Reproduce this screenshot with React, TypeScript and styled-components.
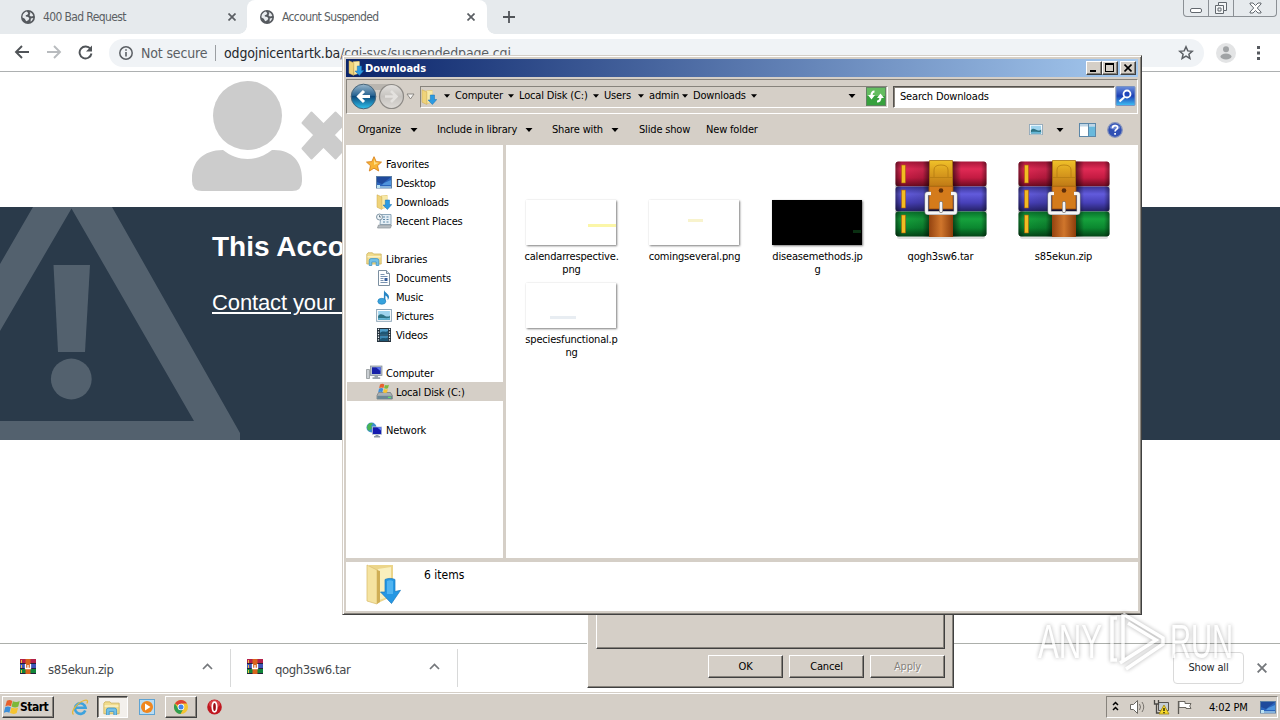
import React from 'react';
import styled, { createGlobalStyle, css } from 'styled-components';

const FACE = '#d5cfc7';

const GlobalStyle = createGlobalStyle`
	*, *::before, *::after {
		box-sizing: border-box;
	}

	body {
		margin: 0;
		overflow: hidden;
		background: #fff;
		color: #000;
		font-family: "DejaVu Sans Condensed", "DejaVu Sans", sans-serif;
		font-size: 11px;
		font-stretch: condensed;
		letter-spacing: -0.17px;
	}

	svg {
		display: block;
		flex: none;
	}
`;

/* ---------- icons ---------- */

const Globe = () => (
	<svg width="14" height="14" viewBox="0 0 14 14">
		<circle cx="7" cy="7" r="7" fill="#55595e" />
		<path d="M1.500 6.300C1.700 4 3.600 2 5.900 1.600L7.300 3.300 6.400 4.700 4.700 5.200 4.900 6.500 7.300 7l1 1.600-1 1.700-2.100.9L3.800 8.700 1.500 7.600z" fill="#e8ebee" />
		<path d="M8.700 1.900c1.800.7 3.200 2.100 3.600 4L9.900 6.400 8.400 5.200 9.300 3.700zM9.800 8.500l2.500-.4c-.3 1.500-1.300 2.900-2.700 3.700z" fill="#e8ebee" />
	</svg>
);

const Cross = ({ size = 8, color = '#5a5e63', width = 1.7 }) => (
	<svg width={size} height={size} viewBox="0 0 8 8">
		<path d="M.5.5l7 7M7.500.5l-7 7" stroke={color} strokeWidth={width} />
	</svg>
);

const Arrow = ({ size = 7 }) => (
	<svg width={size} height="4" viewBox="0 0 7 4">
		<path d="M0 0h7L3.500 4z" fill="#000" />
	</svg>
);

const DownFolder = ({ size = 16 }) => (
	<svg width={size} height={size} viewBox="0 0 16 16">
		<path d="M5 1.500l6.500-.5v12.500L6 15z" fill="#e9cf7c" />
		<path d="M5.500 2l5.800 0v11l-5 1z" fill="#f7e9a8" />
		<path d="M1 .8l4.800 2v12.700L1 13.200z" fill="#efd37a" stroke="#cda94c" strokeWidth=".5" />
		<path d="M9.300 6h4.200v4.500h2.300l-4.400 5-4.400-4.500h2.300z" fill="#2b9be2" stroke="#1b6fb0" strokeWidth=".5" />
	</svg>
);

const BigDownFolder = () => (
	<svg width="36" height="42" viewBox="0 0 36 42">
		<path d="M3 1h24v31l-15 7z" fill="#ecd58a" />
		<path d="M12 5l13-2v29l-12 4z" fill="#f9efbd" />
		<path d="M1 1l10 5v34L1 37z" fill="#f5e3a0" stroke="#dcc071" strokeWidth=".8" />
		<path d="M11 6l3 1v31l-3 2z" fill="#cfae55" />
		<path d="M19 15.500c3-1.500 7-1.500 10 0v12l5.500-1.200L25.500 39.500 14.500 28l4.500 0z" fill="#2597e3" stroke="#1878bd" strokeWidth=".7" />
		<path d="M21 17c2-1 4-1 6 0v13h-6z" fill="#50b4f1" />
	</svg>
);

const Star = () => (
	<svg width="16" height="16" viewBox="0 0 16 16">
		<path d="M8 .7l2.200 4.900 5.300.5-4 3.600 1.200 5.300L8 12.200 3.300 15l1.200-5.300-4-3.600 5.300-.5z" fill="#f8b334" stroke="#d98420" strokeWidth=".9" />
		<path d="M8 3l1.300 3.500 3.500.3L8 9z" fill="#fde08a" />
	</svg>
);

const Desktop = () => (
	<svg width="16" height="13" viewBox="0 0 16 13">
		<rect x=".5" y=".5" width="15" height="11.500" fill="#2a64bd" stroke="#5c7fa5" />
		<path d="M1 1h14L6 8 1 6z" fill="#1f4a9c" />
		<path d="M8 7l7-3v5H6z" fill="#4f94dc" />
		<path d="M1 10h14v2H1z" fill="#85b2dc" />
		<path d="M1 9h3v3H1z" fill="#bce2f2" />
	</svg>
);

const Recent = () => (
	<svg width="16" height="16" viewBox="0 0 16 16">
		<path d="M5 1.500h10v10H4z" fill="#e4eef5" stroke="#8ea8bb" />
		<path d="M7 4h2M10.500 4h2M7 6.500h2M10.500 6.500h2M7 9h2M10.500 9h2" stroke="#5d87a8" strokeWidth="1.200" />
		<path d="M2.500 12h13l-1 3H1.500z" fill="#b7bdc2" stroke="#8b9298" strokeWidth=".7" />
		<circle cx="3.500" cy="4" r="3" fill="#eef4f8" stroke="#8196a5" />
		<path d="M3.500 2.300V4H5" stroke="#47606f" strokeWidth=".8" fill="none" />
	</svg>
);

const Library = ({ size = 16 }) => (
	<svg width={size} height={size * 0.875} viewBox="0 0 16 14">
		<path d="M.8 2.200L2 .8h4.500l1 1.200h7.700v10H.8z" fill="#f1dc8d" stroke="#cdb25c" strokeWidth=".8" />
		<path d="M1.500 4h13v1.500h-13z" fill="#fbf1c3" />
		<path d="M3.200 13.500V8.600q0-2 2-2h5.600q2 0 2 2v4.900h-2.600v-3.500H5.800v3.500z" fill="#72c1e8" stroke="#3e94c8" strokeWidth=".8" />
	</svg>
);

const Doc = () => (
	<svg width="16" height="16" viewBox="0 0 16 16">
		<path d="M2.500.5h8l3 3v12h-11z" fill="#fdfeff" stroke="#7c8fa0" />
		<path d="M10.500.5v3h3" fill="#d4e1ec" stroke="#7c8fa0" />
		<path d="M4.500 4.500h4M4.500 6.500h7M4.500 8.500h3M4.500 10.500h3M4.500 12.500h7" stroke="#7993b0" />
		<path d="M8.500 8h3v3h-3z" fill="#345d9c" />
	</svg>
);

const Music = () => (
	<svg width="16" height="16" viewBox="0 0 16 16">
		<path d="M8 .5c0 3 5 4 5 7.500 0 1.500-.6 2.400-1.300 3.200.4-2.600-.6-4-2.300-4.800V12h-1.600z" fill="#2685c4" />
		<ellipse cx="5.800" cy="12.300" rx="4" ry="3" fill="#37a3dd" stroke="#1f78b5" strokeWidth=".6" />
	</svg>
);

const Picture = ({ width = 16 }) => (
	<svg width={width} height={width * 0.8} viewBox="0 0 16 13">
		<rect x=".5" y=".5" width="15" height="12" fill="#fff" stroke="#8da5b8" />
		<path d="M2 2h12v9H2z" fill="#9fd4ee" />
		<path d="M2 7c3-3 5-1 7 0s4 1 5-.5V11H2z" fill="#2e7385" />
		<path d="M2 9.500c4-1 8 .5 12-.500v2H2z" fill="#64b6d6" />
	</svg>
);

const Video = () => (
	<svg width="14" height="14" viewBox="0 0 14 14">
		<path d="M0 0h14v14H0z" fill="#25323d" />
		<path d="M3 1h8v5.500H3z" fill="#4e9cc8" />
		<path d="M3 7.500h8V13H3z" fill="#3d87b2" />
		<path d="M3 5c3-3 5 0 8-2v3.500H3zM3 11.500c3-3 5 0 8-2V13H3z" fill="#1d5675" />
		<path d="M1.500.8v13M12.500.8v13" stroke="#e8eef2" strokeWidth="1.200" strokeDasharray="1.300 1.300" />
	</svg>
);

const Pc = () => (
	<svg width="17" height="15" viewBox="0 0 17 15">
		<path d="M.5 4.500h3v9h-3z" fill="#c9ced2" stroke="#84898e" strokeWidth=".7" />
		<rect x="4.500" y="1" width="11.500" height="9.500" fill="#b7c2cd" stroke="#7e8893" strokeWidth=".7" />
		<path d="M6 2.300h8.600v6.700H6z" fill="#1720a8" />
		<path d="M10 2.300h4.600v4z" fill="#5a74ee" />
		<path d="M8.500 10.500h3.500v1.800h2.200V14H6.500v-1.700h2z" fill="#9aa4ae" />
	</svg>
);

const WinFlag = ({ size = 16 }) => (
	<svg width={size} height={size} viewBox="0 0 16 16">
		<path d="M2.900 1.800C5 .6 6.300.8 8.300 1.900L7 7.300C5 6.400 3.300 6.300 1.300 7.400z" fill="#e8602c" />
		<path d="M8.900 2.200c2 .9 4.200 1.300 6.800-.3L14.300 7.600c-2.300 1.300-4.500 1-6.700 0z" fill="#7db83a" />
		<path d="M1.200 8.200C3 7.200 4.700 7.300 6.800 8.200l-1.400 5.600C3.500 12.800 1.900 12.800-.2 13.900z" fill="#3d8fd9" />
		<path d="M7.400 8.500c2.100.9 4.300 1.100 6.700-.1l-1.400 5.700c-2.300 1.200-4.500 1-6.700 0z" fill="#f6c431" />
	</svg>
);

const Disk = () => (
	<svg width="17" height="17" viewBox="0 0 17 17">
		<path d="M2.500 9.500h12l1.800 3v3.500H1v-3.500z" fill="#a9b0b3" stroke="#6f767a" strokeWidth=".7" />
		<path d="M1.300 12.800h14.800V16H1.300z" fill="#6b8794" />
		<path d="M12 13.800h3v1.200h-3z" fill="#62e069" />
		<path d="M4 1.500c2-1.200 3-.8 4.300 0L7.500 5C6 4.200 4.800 4.200 3.200 5z" fill="#e8602c" />
		<path d="M8.900 1.900c1.400.7 2.600.6 4-.2l-.9 3.600c-1.300.7-2.500.6-3.900 0z" fill="#7db83a" />
		<path d="M3 5.700c1.500-.8 2.800-.8 4.200 0l-.9 3.500c-1.300-.7-2.700-.7-4.100 0z" fill="#3d8fd9" />
		<path d="M7.900 6c1.400.7 2.600.6 4-.1L11 9.500c-1.400.7-2.600.6-4 0z" fill="#f6c431" />
	</svg>
);

const NetworkIcon = () => (
	<svg width="16" height="16" viewBox="0 0 16 16">
		<circle cx="5.500" cy="5.500" r="5" fill="#3c8fd0" />
		<path d="M2 2.500C4 .5 6 .8 7 1.500L5 4l1 2-3 3C1 7.500.4 5 2 2.500z" fill="#49b552" />
		<path d="M6 4.500h10v8.500H6z" fill="#c0cbd6" />
		<path d="M6.800 5.300h8.400v6.700H6.800z" fill="#151bb0" />
		<path d="M11 5.300h4.200v3.500z" fill="#6180f0" />
		<path d="M9.500 13h3v1h1.600v1.500H8V14h1.500z" fill="#8d98a4" />
	</svg>
);

const Rar = () => (
	<svg width="92" height="80" viewBox="0 0 92 80">
		<defs>
			<linearGradient id="rarRed" x2="0" y2="1">
				<stop offset="0" stopColor="#a8173a" />
				<stop offset=".3" stopColor="#e02a55" />
				<stop offset=".65" stopColor="#c41b42" />
				<stop offset="1" stopColor="#6b0a20" />
			</linearGradient>
			<linearGradient id="rarBlue" x2="0" y2="1">
				<stop offset="0" stopColor="#3a3596" />
				<stop offset=".3" stopColor="#625bdc" />
				<stop offset=".65" stopColor="#4740b8" />
				<stop offset="1" stopColor="#242063" />
			</linearGradient>
			<linearGradient id="rarGreen" x2="0" y2="1">
				<stop offset="0" stopColor="#08702b" />
				<stop offset=".3" stopColor="#16a23d" />
				<stop offset=".65" stopColor="#0b8830" />
				<stop offset="1" stopColor="#044517" />
			</linearGradient>
			<linearGradient id="rarShade">
				<stop offset="0" stopColor="#000" stopOpacity=".45" />
				<stop offset=".07" stopColor="#000" stopOpacity="0" />
				<stop offset=".3" stopColor="#000" stopOpacity=".12" />
				<stop offset=".36" stopColor="#000" stopOpacity=".5" />
				<stop offset=".64" stopColor="#000" stopOpacity=".5" />
				<stop offset=".72" stopColor="#000" stopOpacity="0" />
				<stop offset=".94" stopColor="#000" stopOpacity="0" />
				<stop offset="1" stopColor="#000" stopOpacity=".4" />
			</linearGradient>
			<linearGradient id="rarGold" x2="0" y2="1">
				<stop offset="0" stopColor="#f0c22a" />
				<stop offset=".4" stopColor="#dda21f" />
				<stop offset="1" stopColor="#c17a17" />
			</linearGradient>
			<linearGradient id="rarBrown">
				<stop offset="0" stopColor="#944310" />
				<stop offset=".5" stopColor="#d0762c" />
				<stop offset="1" stopColor="#8c3d0c" />
			</linearGradient>
		</defs>
		<rect x="2" y="75" width="88" height="4" rx="2" fill="#000" opacity=".12" />
		<rect x=".5" y="1.500" width="91" height="25" rx="3" fill="url(#rarRed)" />
		<rect x=".5" y="26.500" width="91" height="25" rx="3" fill="url(#rarBlue)" />
		<rect x=".5" y="51.500" width="91" height="25" rx="3" fill="url(#rarGreen)" />
		<rect x=".5" y="1.500" width="91" height="75" rx="3" fill="url(#rarShade)" />
		<path d="M6.500 5h4v18h-4zM6.500 30h4v18h-4zM6.500 55h4v18h-4z" fill="#f2bd22" stroke="#a9570f" strokeWidth=".6" />
		<path d="M34 53h24v24H34z" fill="url(#rarBrown)" />
		<path d="M34 26h24v23H34z" fill="#d47b1b" stroke="#8f480d" strokeWidth=".8" />
		<path d="M34.500.5h23V26h-23z" fill="url(#rarGold)" stroke="#a8730f" strokeWidth=".8" />
		<path d="M35 17.500h22M39 17V10q0-5 7-5t7 5v7" fill="none" stroke="#b57c12" strokeWidth=".8" />
		<circle cx="46" cy="30.500" r="2.300" fill="#5e2d0a" />
		<path d="M36 33.500h-3q-1.500 0-1.500 1.500v16.500q0 1.500 1.500 1.500h26q1.500 0 1.500-1.500V35q0-1.500-1.500-1.500H56" fill="none" stroke="#8a8a8d" strokeWidth="4" />
		<path d="M36 33.500h-3q-1.500 0-1.500 1.500v16.500q0 1.500 1.500 1.500h26q1.500 0 1.500-1.500V35q0-1.500-1.500-1.500H56" fill="none" stroke="#f4f4f6" strokeWidth="2.800" />
		<path d="M46 43v8" stroke="#76706b" strokeWidth="3.800" strokeLinecap="round" />
		<path d="M46 43v8" stroke="#f2f2f4" strokeWidth="2.600" strokeLinecap="round" />
	</svg>
);

const SmallRar = () => (
	<svg width="16" height="15" viewBox="0 0 16 15">
		<path d="M0 0h16v5H0z" fill="#b32049" />
		<path d="M0 5h16v5H0z" fill="#4055b8" />
		<path d="M0 10h16v5H0z" fill="#11853a" />
		<path d="M0 4.500h16M0 9.500h16M0 14.500h16" stroke="#25203a" />
		<path d="M1.500 1v3M1.500 6v3M1.500 11v3" stroke="#eec145" />
		<path d="M5.500 0h5v15h-5z" fill="#d8631d" />
		<path d="M5.500 5v4.500h5V5M8 6v3.500" stroke="#fff" strokeWidth="1.300" fill="none" />
	</svg>
);

const Chevron = () => (
	<svg width="11" height="7" viewBox="0 0 11 7">
		<path d="M1 6l4.500-4.500L10 6" fill="none" stroke="#74777b" strokeWidth="1.700" />
	</svg>
);

/* ---------- browser ---------- */

const Screen = styled.div`
	position: relative;
	width: 1280px;
	height: 720px;
	display: flex;
	flex-direction: column;
	overflow: hidden;
	white-space: nowrap;
	cursor: default;
`;

const TabStrip = styled.div`
	height: 34px;
	flex: none;
	display: flex;
	background: #e6eaed;
`;

const Tab = styled.div<{ $active?: boolean }>`
	position: relative;
	width: ${({ $active }) => ($active ? 240 : 247)}px;
	padding: 0 ${({ $active }) => ($active ? '12px 0 13px' : '11px 0 21px')};
	display: flex;
	align-items: center;
	color: #5b5f64;
	font-size: 12px;
	letter-spacing: -0.62px;

	${({ $active }) =>
		$active &&
		css`
			background: #fff;
			border-radius: 8px 8px 0 0;

			&::before,
			&::after {
				content: '';
				position: absolute;
				bottom: 0;
				width: 8px;
				height: 8px;
			}

			&::before {
				left: -8px;
				background: radial-gradient(circle at 0 0, transparent 7.5px, #fff 8px);
			}

			&::after {
				right: -8px;
				background: radial-gradient(circle at 8px 0, transparent 7.5px, #fff 8px);
			}
		`}
`;

const TabTitle = styled.span`
	flex: 1;
	margin-left: 8px;
`;

const NewTab = styled.div`
	width: 44px;
	display: flex;
	align-items: center;
	justify-content: center;
`;

const Controls = styled.div`
	display: grid;
	grid-template-columns: 24px 25px 43px;
	height: 17px;
	margin: 0 3px 0 auto;
	border: 1px solid #8b9095;
	border-top: 0;
	border-radius: 0 0 4px 4px;
`;

const Control = styled.div`
	display: flex;
	align-items: center;
	justify-content: center;

	& + & {
		border-left: 1px solid #8b9095;
	}
`;

const Toolbar = styled.div`
	height: 38px;
	flex: none;
	display: flex;
	align-items: center;
	padding-left: 14px;
	border-bottom: 1px solid #adb0b1;
	background: #fff;
`;

const NavGlyph = styled.div`
	width: 32px;
	padding-bottom: 1px;
`;

const Omnibox = styled.div`
	display: flex;
	align-items: center;
	width: 1095px;
	height: 28px;
	margin-left: -1px;
	padding: 0 10px 0 10px;
	border-radius: 14px;
	background: #f0f3f6;
	color: #5b5f64;
	font-size: 14px;
	letter-spacing: -0.15px;
`;

const Security = styled.span`
	width: 74px;
	margin-left: 8px;
	padding-right: 7px;
	letter-spacing: -0.15px;
`;

const Url = styled.span`
	flex: 1;
	padding-left: 8px;
	border-left: 1px solid #9b9ea2;
	line-height: 16px;

	b {
		color: #25282c;
		font-weight: 400;
	}
`;

const Avatar = styled.div`
	margin-left: 12px;
	margin-right: 21px;
`;

const Page = styled.div`
	flex: 1;
	background: #fff;
`;

const Account = styled.div`
	height: 135px;
	padding: 9px 0 0 192px;
`;

const Band = styled.div`
	display: flex;
	height: 233px;
	background: #2a3a4a;
	color: #fff;
	font-family: "Liberation Sans", Arial, sans-serif;
	letter-spacing: 0;
`;

const Message = styled.div`
	margin-left: -28px;
	padding-top: 23px;
	font-size: 22px;

	h1 {
		margin: 0 0 25px;
		font-size: 28px;
		line-height: 34px;
		letter-spacing: 0;
	}

	a {
		display: block;
		line-height: 28px;
		text-decoration: underline;
		letter-spacing: -0.12px;
	}
`;

const Shelf = styled.div`
	height: 49px;
	flex: none;
	display: flex;
	align-items: center;
	border-top: 1px solid #acafab;
	background: #fff;
`;

const Download = styled.div<{ $width: number }>`
	width: ${({ $width }) => $width}px;
	height: 38px;
	display: flex;
	align-items: center;
	padding: 0 17px 3px ${({ $width }) => ($width > 228 ? 20 : 16)}px;
	border-right: 1px solid #d8d9d9;
	color: #44474b;
	font-size: 13px;
	letter-spacing: -0.4px;

	span {
		flex: 1;
		margin-left: 12px;
		padding-top: 6px;
	}
`;

const ShowAll = styled.div`
	width: 71px;
	height: 32px;
	margin: 0 13px 0 auto;
	display: flex;
	align-items: center;
	justify-content: center;
	padding-bottom: 2px;
	border: 1px solid #dadada;
	border-radius: 4px;
	color: #25282c;
`;

const ShelfClose = styled.div`
	margin-right: 13px;
`;

/* ---------- classic windows parts ---------- */

const raised = css`
	border: 1px solid;
	border-color: #fff #404040 #404040 #fff;
	box-shadow: inset -1px -1px #87837c;
	background: ${FACE};
`;

const sunken = css`
	border: 1px solid;
	border-color: #87837c #fff #fff #87837c;
`;

const Dialog = styled.div`
	position: absolute;
	left: 587px;
	top: 600px;
	width: 367px;
	height: 88px;
	padding: 0 8px;
	${raised}
`;

const DialogPanel = styled.div`
	height: 48px;
	border: 1px solid;
	border-color: #fff #404040 #404040 #fff;
	box-shadow: inset -1px -1px #87837c;
`;

const DialogButtons = styled.div`
	display: flex;
	justify-content: flex-end;
	gap: 6px;
	margin-top: 6px;
`;

const DialogButton = styled.div<{ $disabled?: boolean }>`
	width: 75px;
	height: 23px;
	display: flex;
	align-items: center;
	justify-content: center;
	padding-bottom: 1px;
	${raised}
	${({ $disabled }) =>
		$disabled &&
		css`
			color: #87837c;
			text-shadow: 1px 1px #fff;
		`}
`;

const Explorer = styled.div`
	position: absolute;
	left: 342px;
	top: 55px;
	width: 800px;
	height: 560px;
	display: flex;
	flex-direction: column;
	padding: 3px;
	border: 1px solid;
	border-color: ${FACE} #404040 #404040 ${FACE};
	box-shadow: inset 1px 1px #fff, inset -1px -1px #87837c;
	background: ${FACE};
`;

const TitleBar = styled.div`
	height: 18px;
	flex: none;
	display: flex;
	align-items: center;
	padding: 0 2px;
	background: linear-gradient(to right, #0a246a, #a6caf0);
	color: #fff;
	font-weight: 700;
	letter-spacing: 0;

	span {
		flex: 1;
		margin-left: 1px;
	}
`;

const CaptionButton = styled.div<{ $gap?: boolean }>`
	width: 16px;
	height: 14px;
	margin-left: ${({ $gap }) => ($gap ? 2 : 0)}px;
	display: flex;
	align-items: center;
	justify-content: center;
	${raised}
`;

const NavBar = styled.div`
	height: 35px;
	flex: none;
	margin-top: 2px;
	display: flex;
	align-items: center;
	padding-left: 3px;
	border: 1px solid;
	border-color: #87837c #fff #fff #87837c;
`;

const Address = styled.div`
	width: 468px;
	height: 22px;
	margin-left: 5px;
	display: flex;
	align-items: center;
	${sunken}
`;

const Crumb = styled.div<{ $width: number }>`
	width: ${({ $width }) => $width}px;
	display: flex;
	align-items: center;

	span {
		margin-left: 5px;
	}
`;

const Crumbs = styled.div`
	display: flex;
	align-items: center;
	padding-bottom: 2px;
`;

const Search = styled.div`
	width: 222px;
	height: 22px;
	margin-left: 5px;
	padding-left: 6px;
	line-height: 19px;
	border: 1px solid;
	border-color: #55524e #fff #fff #55524e;
	box-shadow: inset 1px 1px #87837c;
	background: #fff;
`;

const Commands = styled.div`
	height: 31px;
	flex: none;
	display: flex;
	align-items: center;
	padding-left: 12px;
`;

const Command = styled.div<{ $width: number; $text?: number }>`
	width: ${({ $width }) => $width}px;
	display: flex;
	align-items: center;

	span {
		width: ${({ $text }) => ($text ? $text + 'px' : 'auto')};
	}
`;

const CommandIcons = styled.div`
	flex: 1;
	display: flex;
	align-items: center;
	justify-content: flex-end;
	padding-right: 15px;
`;

const CommandIcon = styled.div<{ $gap: number }>`
	margin-left: ${({ $gap }) => $gap}px;
`;

const Body = styled.div`
	height: 413px;
	flex: none;
	display: flex;
	background: #fff;
`;

const Tree = styled.div`
	width: 160px;
	padding-top: 9px;
	border-right: 3px solid ${FACE};
`;

const Group = styled.div`
	margin-bottom: 19px;
`;

const Node = styled.div<{ $child?: boolean; $selected?: boolean }>`
	height: 19px;
	display: flex;
	align-items: center;
	margin-left: 1px;
	padding-left: ${({ $child }) => ($child ? 28 : 18)}px;
	background: ${({ $selected }) => ($selected ? FACE : 'none')};

	span {
		padding-top: 2px;
	}
`;

const NodeIcon = styled.div`
	width: 18px;
	margin-right: 3px;
	display: flex;
	justify-content: center;
`;

const Files = styled.div`
	display: grid;
	grid-template-columns: repeat(5, 123px);
	grid-template-rows: 122px 83px;
	padding: 9px 0 0 4px;
`;

const File = styled.div`
	display: flex;
	flex-direction: column;
	align-items: center;
	justify-content: flex-start;
`;

const Preview = styled.div<{ $height: number; $archive: boolean }>`
	height: ${({ $height }) => $height}px;
	display: flex;
	align-items: flex-end;
	padding-bottom: ${({ $archive }) => ($archive ? 10 : 5)}px;
`;

const Thumb = styled.div<{ $fill?: string }>`
	width: 90px;
	height: 45px;
	margin-right: 1px;
	background: ${({ $fill }) => $fill || '#fff'};
	box-shadow: 1px 1px 2px rgba(0, 0, 0, 0.5), 0 0 1px rgba(0, 0, 0, 0.1);
`;

const Mark = styled.div<{ $x: number; $y: number; $w: number; $color: string }>`
	width: ${({ $w }) => $w}px;
	height: 3px;
	margin-left: ${({ $x }) => $x}px;
	transform: translateY(${({ $y }) => $y}px);
	background: ${({ $color }) => $color};
`;

const FileName = styled.div`
	line-height: 13px;
	text-align: center;
	white-space: pre;
`;

const Details = styled.div`
	flex: 1;
	margin-top: 4px;
	display: flex;
	padding: 2px 0 0 20px;
	background: #fff;

	span {
		margin: 4px 0 0 22px;
		font-size: 12px;
		letter-spacing: 0;
	}
`;

/* ---------- taskbar ---------- */

const Taskbar = styled.div`
	height: 28px;
	flex: none;
	display: flex;
	align-items: center;
	padding: 1px 2px 0;
	border-top: 1px solid ${FACE};
	box-shadow: inset 0 1px #fff;
	background: ${FACE};
`;

const Start = styled.div`
	width: 52px;
	height: 22px;
	display: flex;
	align-items: center;
	margin-right: 9px;
	padding-left: 1px;
	font-size: 12px;
	font-weight: 700;
	letter-spacing: -0.5px;
	${raised}
`;

const Task = styled.div<{ $width: number; $state?: 'up' | 'down' }>`
	width: ${({ $width }) => $width}px;
	height: 22px;
	display: flex;
	align-items: center;
	justify-content: center;
	${({ $state }) => $state === 'up' && raised}
	${({ $state }) =>
		$state === 'down' &&
		css`
			border: 1px solid;
			border-color: #404040 #fff #fff #404040;
			box-shadow: inset 1px 1px #87837c;
			background: #f3f0ec;
			padding: 2px 2px 0 0;
		`}
`;

const Tray = styled.div`
	width: 172px;
	height: 22px;
	margin-left: auto;
	display: flex;
	align-items: center;
	padding: 0 1px 0 5px;
	${sunken}
`;

const Clock = styled.span`
	width: 52px;
	margin-left: 14px;
`;

const Watermark = styled.div`
	position: absolute;
	left: 1030px;
	top: 605px;
	filter: drop-shadow(0 0 2px rgba(0, 0, 0, 0.45));
	opacity: 0.68;
`;

const tree = [
	{ name: 'Favorites', icon: <Star />, items: [
		{ name: 'Desktop', icon: <Desktop /> },
		{ name: 'Downloads', icon: <DownFolder /> },
		{ name: 'Recent Places', icon: <Recent /> },
	] },
	{ name: 'Libraries', icon: <Library />, items: [
		{ name: 'Documents', icon: <Doc /> },
		{ name: 'Music', icon: <Music /> },
		{ name: 'Pictures', icon: <Picture /> },
		{ name: 'Videos', icon: <Video /> },
	] },
	{ name: 'Computer', icon: <Pc />, items: [
		{ name: 'Local Disk (C:)', icon: <Disk />, selected: true },
	] },
	{ name: 'Network', icon: <NetworkIcon />, items: [] },
];

const crumbs = [
	{ name: 'Computer', width: 64 },
	{ name: 'Local Disk (C:)', width: 85 },
	{ name: 'Users', width: 45 },
	{ name: 'admin', width: 44 },
	{ name: 'Downloads', width: 69 },
];

const files = [
	{ name: 'calendarrespective.\npng', mark: { x: 62, y: 24, w: 28, color: '#fbf6a8' } },
	{ name: 'comingseveral.png', mark: { x: 39, y: 19, w: 15, color: '#f8f3cd' } },
	{ name: 'diseasemethods.jp\ng', fill: '#000', mark: { x: 81, y: 30, w: 8, color: '#0a2f12' } },
	{ name: 'qogh3sw6.tar' },
	{ name: 's85ekun.zip' },
	{ name: 'speciesfunctional.p\nng', mark: { x: 24, y: 33, w: 26, color: '#e8edf2' } },
];

const BrowserTabs = () => (
	<TabStrip>
		<Tab>
			<Globe />
			<TabTitle>400 Bad Request</TabTitle>
			<Cross />
		</Tab>
		<Tab $active>
			<Globe />
			<TabTitle>Account Suspended</TabTitle>
			<Cross />
		</Tab>
		<NewTab>
			<svg width="12" height="12" viewBox="0 0 12 12">
				<path d="M6 0v12M0 6h12" stroke="#515559" strokeWidth="1.800" />
			</svg>
		</NewTab>
		<Controls>
			<Control>
				<svg width="12" height="14" viewBox="0 0 12 14">
					<rect x=".5" y="7.500" width="11" height="4" rx="1.500" fill="#fff" stroke="#62686e" />
				</svg>
			</Control>
			<Control>
				<svg width="14" height="14" viewBox="0 0 14 14">
					<path d="M4.500 1.500h8v8h-3v3h-8v-8h3z" fill="#f4f6f7" stroke="#62686e" />
					<path d="M4.500 4.500h5v5M4 7h3v3H4z" fill="none" stroke="#62686e" />
				</svg>
			</Control>
			<Control>
				<svg width="13" height="12" viewBox="0 0 13 12">
					<path d="M1 1h3l2.500 2.500L9 1h3v1L8.300 6l3.700 4v1H9L6.500 8.500 4 11H1v-1l3.700-4L1 2z" fill="#fff" stroke="#62686e" />
				</svg>
			</Control>
		</Controls>
	</TabStrip>
);

const BrowserToolbar = () => (
	<Toolbar>
		<NavGlyph>
			<svg width="16" height="14" viewBox="0 0 16 14">
				<path d="M15 7H2M8 1L2 7l6 6" fill="none" stroke="#505458" strokeWidth="1.900" />
			</svg>
		</NavGlyph>
		<NavGlyph>
			<svg width="16" height="14" viewBox="0 0 16 14">
				<path d="M1 7h13M8 1l6 6-6 6" fill="none" stroke="#b8bbbe" strokeWidth="1.900" />
			</svg>
		</NavGlyph>
		<NavGlyph>
			<svg width="15" height="15" viewBox="0 0 15 15">
				<path d="M12.500 4A6 6 0 1 0 13.500 8.500" fill="none" stroke="#505458" strokeWidth="1.900" />
				<path d="M14 .5v6H8z" fill="#505458" />
			</svg>
		</NavGlyph>
		<Omnibox>
			<svg width="14" height="14" viewBox="0 0 14 14">
				<circle cx="7" cy="7" r="6.200" fill="none" stroke="#5b5f64" strokeWidth="1.500" />
				<path d="M7 6v4.500M7 3.300v1.500" stroke="#5b5f64" strokeWidth="1.600" />
			</svg>
			<Security>Not secure</Security>
			<Url>
				<b>odgojnicentartk.ba</b>/cgi-sys/suspendedpage.cgi
			</Url>
			<svg width="16" height="15" viewBox="0 0 16 15">
				<path d="M8 1.800l1.800 4.100 4.400.4-3.300 2.900 1 4.300L8 11.200l-3.900 2.300 1-4.300-3.300-2.900 4.400-.4z" fill="none" stroke="#5b5f64" strokeWidth="1.500" />
			</svg>
		</Omnibox>
		<Avatar>
			<svg width="20" height="20" viewBox="0 0 20 20">
				<circle cx="10" cy="10" r="10" fill="#e3e4e5" />
				<circle cx="10" cy="6.200" r="3" fill="#a0a3a5" />
				<ellipse cx="10" cy="13.500" rx="5.500" ry="3" fill="#a0a3a5" />
			</svg>
		</Avatar>
		<svg width="3" height="14" viewBox="0 0 3 14">
			<path d="M0 0h3v3H0zM0 5.500h3v3H0zM0 11h3v3H0z" fill="#55595e" />
		</svg>
	</Toolbar>
);

const SuspendedPage = () => (
	<Page>
		<Account>
			<svg width="160" height="110" viewBox="0 0 160 110">
				<g fill="#ccc">
					<circle cx="55.500" cy="34.500" r="34.500" />
					<path d="M31 69c15 12 34 12 49 0 20-1 30 12 30 28v3q0 10-10 10H10Q0 110 0 100v-3C0 81 11 69 31 69z" />
					<path d="M119.500 31.500l12 12 12-12 10 10-12 12.500 12 12.500-10 11-12-12-12 12-9-10 12-13.500-12-12z" stroke="#ccc" strokeWidth="2" strokeLinejoin="round" />
				</g>
			</svg>
		</Account>
		<Band>
			<svg width="240" height="233" viewBox="0 0 240 233">
				<path d="M33 0h79l128 226v7H0v-19h194L71.500 1.500 0 124V57z" fill="#53616e" />
				<path d="M53.500 58H90l-5 87H58z" fill="#53616e" />
				<circle cx="71.300" cy="172" r="20.400" fill="#53616e" />
			</svg>
			<Message>
				<h1>This Accou</h1>
				<a>Contact your&nbsp;&nbsp;</a>
			</Message>
		</Band>
	</Page>
);

const ExplorerWindow = () => (
	<Explorer>
		<TitleBar>
			<DownFolder />
			<span>Downloads</span>
			<CaptionButton>
				<svg width="12" height="10" viewBox="0 0 12 10">
					<path d="M2 7h6v2H2z" />
				</svg>
			</CaptionButton>
			<CaptionButton>
				<svg width="10" height="10" viewBox="0 0 10 10">
					<path d="M0 0h9v9H0zM1 2v6h7V2z" fillRule="evenodd" />
				</svg>
			</CaptionButton>
			<CaptionButton $gap>
				<Cross size={8} color="#000" width={1.6} />
			</CaptionButton>
		</TitleBar>
		<NavBar>
			<svg width="65" height="29" viewBox="0 0 65 29">
				<defs>
					<linearGradient id="back" x2="0" y2="1">
						<stop offset="0" stopColor="#9ab8cc" />
						<stop offset=".45" stopColor="#2a6593" />
						<stop offset=".5" stopColor="#0d4a7c" />
						<stop offset="1" stopColor="#2fc3ef" />
					</linearGradient>
					<linearGradient id="fwd" x2="0" y2="1">
						<stop offset="0" stopColor="#e4e2df" />
						<stop offset=".5" stopColor="#c6c3bf" />
						<stop offset="1" stopColor="#dedbd7" />
					</linearGradient>
				</defs>
				<path d="M13 2h30q5 2 8 6H8z" fill="#b9b5af" />
				<circle cx="13.500" cy="14.500" r="12.300" fill="url(#back)" stroke="#47657a" />
				<path d="M14 9l-5.500 5.500L14 20M9 14.500h11" fill="none" stroke="#fff" strokeWidth="3" />
				<circle cx="41.500" cy="14.500" r="12" fill="url(#fwd)" stroke="#8c8985" strokeWidth="1.200" />
				<path d="M41 9l5.500 5.500L41 20M46 14.500H35" fill="none" stroke="#e3e1de" strokeWidth="2.600" />
				<path d="M57 12h7l-3.500 5z" fill="#f5f4f2" stroke="#77736e" strokeWidth=".8" />
			</svg>
			<Address>
				<Crumb $width={23}>
					<DownFolder />
				</Crumb>
				<Crumbs>
					{crumbs.map(crumb => (
						<Crumb key={crumb.name} $width={crumb.width}>
							<Arrow size={6} />
							<span>{crumb.name}</span>
						</Crumb>
					))}
					<Crumb $width={97}>
						<Arrow size={6} />
					</Crumb>
					<Crumb $width={18}>
						<Arrow size={8} />
					</Crumb>
				</Crumbs>
				<svg width="20" height="19" viewBox="0 0 20 19">
					<rect x=".5" y=".5" width="19" height="18" fill="#37a13d" stroke="#5f8462" />
					<path d="M1 1h18v8H1z" fill="#64bd60" />
					<path d="M8.500 4.500q-3 0-3 4.500M11 14.500q3.500 0 3.500-4.500" fill="none" stroke="#fff" strokeWidth="2.200" />
					<path d="M2 8h7l-3.500 4.500zM11 11h7l-3.500-4.500z" fill="#fff" />
				</svg>
			</Address>
			<Search>Search Downloads</Search>
			<svg width="22" height="21" viewBox="0 0 22 21">
				<defs>
					<linearGradient id="find" x2="0" y2="1">
						<stop offset="0" stopColor="#6c8fdb" />
						<stop offset=".5" stopColor="#1c3fb5" />
						<stop offset="1" stopColor="#3fc1f5" />
					</linearGradient>
				</defs>
				<rect x="1" y=".5" width="19" height="19" rx="1" fill="url(#find)" stroke="#7a93c2" />
				<circle cx="12" cy="8" r="3.500" fill="#1f46bb" stroke="#fff" strokeWidth="1.800" />
				<path d="M9.500 11l-5 4.500" stroke="#fff" strokeWidth="2.200" />
			</svg>
		</NavBar>
		<Commands>
			<Command $width={79} $text={52}>
				<span>Organize</span>
				<Arrow size={8} />
			</Command>
			<Command $width={115} $text={88}>
				<span>Include in library</span>
				<Arrow size={8} />
			</Command>
			<Command $width={87} $text={59}>
				<span>Share with</span>
				<Arrow size={8} />
			</Command>
			<Command $width={67}>Slide show</Command>
			<Command $width={60}>New folder</Command>
			<CommandIcons>
				<Picture width={14} />
				<CommandIcon $gap={13}>
					<Arrow size={8} />
				</CommandIcon>
				<CommandIcon $gap={15}>
					<svg width="17" height="14" viewBox="0 0 17 14">
						<rect x=".5" y=".5" width="16" height="13" fill="#fff" stroke="#5c87a8" />
						<path d="M1 1h15v2.500H1z" fill="#bfd5e5" />
						<path d="M10 3.500h6V13h-6z" fill="#69b9dc" />
						<path d="M9.500 1v12" stroke="#5c87a8" />
					</svg>
				</CommandIcon>
				<CommandIcon $gap={11}>
					<svg width="16" height="16" viewBox="0 0 16 16">
						<circle cx="8" cy="8" r="7.300" fill="#3050b4" stroke="#8795bd" strokeWidth="1.200" />
						<path d="M2.500 6a6 6 0 0 1 11 0q-5.500 3-11 0z" fill="#6983d2" />
						<path d="M5.500 6.200q0-2.600 2.600-2.600t2.500 2.200c0 1.600-2.500 1.700-2.500 3.700M8.100 11v1.800" fill="none" stroke="#fff" strokeWidth="1.700" />
					</svg>
				</CommandIcon>
			</CommandIcons>
		</Commands>
		<Body>
			<Tree>
				{tree.map(group => (
					<Group key={group.name}>
						<Node>
							<NodeIcon>{group.icon}</NodeIcon>
							<span>{group.name}</span>
						</Node>
						{group.items.map((item: any) => (
							<Node key={item.name} $child $selected={item.selected}>
								<NodeIcon>{item.icon}</NodeIcon>
								<span>{item.name}</span>
							</Node>
						))}
					</Group>
				))}
			</Tree>
			<Files>
				{files.map((file, i) => (
					<File key={file.name}>
						<Preview $height={i < 5 ? 96 : 57} $archive={!file.mark}>
							{file.mark ? (
								<Thumb $fill={file.fill}>
									<Mark $x={file.mark.x} $y={file.mark.y} $w={file.mark.w} $color={file.mark.color} />
								</Thumb>
							) : (
								<Rar />
							)}
						</Preview>
						<FileName>{file.name}</FileName>
					</File>
				))}
			</Files>
		</Body>
		<Details>
			<BigDownFolder />
			<span>6 items</span>
		</Details>
	</Explorer>
);

const SystemTaskbar = () => (
	<Taskbar>
		<Start>
			<WinFlag />
			Start
		</Start>
		<Task $width={34}>
			{/* internet explorer */}
			<svg width="18" height="17" viewBox="0 0 18 17">
				<path d="M14.300 11.500A5.300 5.300 0 1 1 14.600 8.800H5" fill="none" stroke="#3da2dd" strokeWidth="2.600" />
				<path d="M2.500 15.500C-1 13 6 4 13 1.500c4-1.300 4 1 2.800 3" fill="none" stroke="#e4b83a" strokeWidth="1.300" />
			</svg>
		</Task>
		<Task $width={31} $state="down">
			<Library size={17} />
		</Task>
		<Task $width={37}>
			<svg width="16" height="16" viewBox="0 0 16 16">
				<rect x=".5" y=".5" width="15" height="15" fill="#b9dcf3" stroke="#5ea3d3" />
				<circle cx="8" cy="8" r="6" fill="#f0861e" />
				<path d="M6 4.500l5.500 3.500L6 11.500z" fill="#fff" />
			</svg>
		</Task>
		<Task $width={32} $state="up">
			<svg width="14" height="14" viewBox="0 0 14 14">
				<circle cx="7" cy="7" r="7" fill="#f4c430" />
				<path d="M7 7L1 3.400A7 7 0 0 1 13 3.500H7z" fill="#dd4234" />
				<path d="M.9 3.500A7 7 0 0 0 6.500 14L9 9.500H5z" fill="#2f9e50" />
				<circle cx="7" cy="7" r="3.300" fill="#fff" />
				<circle cx="7" cy="7" r="2.500" fill="#4384ea" />
			</svg>
		</Task>
		<Task $width={34}>
			<svg width="15" height="16" viewBox="0 0 15 16">
				<ellipse cx="7.500" cy="8" rx="7.300" ry="7.500" fill="#c01820" />
				<ellipse cx="7.500" cy="5" rx="5.500" ry="4" fill="#d94448" />
				<ellipse cx="7.500" cy="8" rx="2.200" ry="4.800" fill="#9b0c13" stroke="#fff" strokeWidth="1.700" />
			</svg>
		</Task>
		<Tray>
			<svg width="83" height="18" viewBox="0 0 83 18">
				<path d="M1 7l2.500-2.500L6 7M1 12l2.500-2.500L6 12" fill="none" stroke="#000" strokeWidth="1.500" />
				<path d="M18.500 6.500h3l4-4v13l-4-4h-3z" fill="#fff" stroke="#6b6862" />
				<path d="M27.500 6q2 3 0 6M30 4q3.500 5 0 10" fill="none" stroke="#77736d" />
				<path d="M46.500 4.500h10v8h-10z" fill="#c5cdd3" stroke="#56534f" />
				<path d="M42.500 2v4h4V2M44.500 6v9h5" fill="none" stroke="#4a4845" strokeWidth="1.300" />
				<path d="M52 7l5 9H47z" fill="#f7d928" stroke="#a08412" strokeWidth=".8" />
				<path d="M52 10v3M52 14v1.200" stroke="#000" strokeWidth="1.200" />
				<path d="M66.500 16V3" stroke="#5c5954" strokeWidth="1.300" />
				<path d="M67 3.500h6v2h6q-2.500 2.500 0 5h-5v-1h-7z" fill="#fff" stroke="#6b6862" />
			</svg>
			<Clock>4:02 PM</Clock>
			<Desktop />
		</Tray>
	</Taskbar>
);

export default () => {
	return (
		<Screen>
			<GlobalStyle />
			<BrowserTabs />
			<BrowserToolbar />
			<SuspendedPage />
			<Shelf>
				<Download $width={231}>
					<SmallRar />
					<span>s85ekun.zip</span>
					<Chevron />
				</Download>
				<Download $width={227}>
					<SmallRar />
					<span>qogh3sw6.tar</span>
					<Chevron />
				</Download>
				<ShowAll>Show all</ShowAll>
				<ShelfClose>
					<Cross size={10} color="#74777b" width={1.500} />
				</ShelfClose>
			</Shelf>
			<SystemTaskbar />
			<Dialog>
				<DialogPanel />
				<DialogButtons>
					<DialogButton>OK</DialogButton>
					<DialogButton>Cancel</DialogButton>
					<DialogButton $disabled>Apply</DialogButton>
				</DialogButtons>
			</Dialog>
			<ExplorerWindow />
			<Watermark>
				<svg width="210" height="72" viewBox="0 0 210 72" fill="#fff">
					<text x="8" y="53" fontFamily="Liberation Sans, sans-serif" fontSize="49" textLength="64" lengthAdjust="spacingAndGlyphs">ANY</text>
					<text x="140" y="53" fontFamily="Liberation Sans, sans-serif" fontSize="49" textLength="63" lengthAdjust="spacingAndGlyphs">RUN</text>
					<path d="M87 13h-5v42h5M93 9v48M93 9l40 24v6L96 64M98 18l28 17-36 23" fill="none" stroke="#fff" strokeWidth="3.500" />
				</svg>
			</Watermark>
		</Screen>
	);
};
